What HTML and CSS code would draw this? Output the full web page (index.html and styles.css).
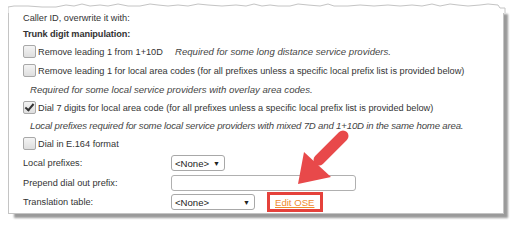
FILE: index.html
```html
<!DOCTYPE html>
<html>
<head>
<meta charset="utf-8">
<link rel="stylesheet" href="styles.css">
</head>
<body>
<div class="card">
  <svg class="torn" width="500" height="10" viewBox="0 0 500 10">
    <path d="M0 10 L0 4 L6 3 L20 3 L34 4 L48 4 L58 2 L66 3 L74 1 L82 3 L92 2 L100 3 L110 1 L120 3 L132 3 L142 1 L150 2 L160 3 L170 2 L180 3 L190 1 L200 2 L214 3 L228 2 L238 3 L246 1 L254 3 L262 2 L270 3 L282 3 L290 1 L300 2 L312 3 L320 1 L326 3 L340 3 L352 2 L366 3 L380 2 L392 3 L404 2 L414 3 L424 1 L432 3 L442 1 L450 2 L460 3 L472 2 L480 1 L490 2 L492 5 L497 5 L497 10 Z" fill="#fff" stroke="none"/>
    <path d="M0 10 L0 4 L6 3 L20 3 L34 4 L48 4 L58 2 L66 3 L74 1 L82 3 L92 2 L100 3 L110 1 L120 3 L132 3 L142 1 L150 2 L160 3 L170 2 L180 3 L190 1 L200 2 L214 3 L228 2 L238 3 L246 1 L254 3 L262 2 L270 3 L282 3 L290 1 L300 2 L312 3 L320 1 L326 3 L340 3 L352 2 L366 3 L380 2 L392 3 L404 2 L414 3 L424 1 L432 3 L442 1 L450 2 L460 3 L472 2 L480 1 L490 2 L492 5 L497 5 L497 10" fill="none" stroke="#c4c4c4" stroke-width="1"/>
  </svg>
  <div class="row h16">Caller ID, overwrite it with:</div>
  <div class="row h16 bold">Trunk digit manipulation:</div>
  <div class="row h19"><span class="cb"></span><span class="opt1">Remove leading 1 from 1+10D</span><span class="note">Required for some long distance service providers.</span></div>
  <div class="row h19"><span class="cb"></span><span>Remove leading 1 for local area codes (for all prefixes unless a specific local prefix list is provided below)</span></div>
  <div class="row h19 sub note">Required for some local service providers with overlay area codes.</div>
  <div class="row h17"><span class="cb checked"></span><span>Dial 7 digits for local area code (for all prefixes unless a specific local prefix list is provided below)</span></div>
  <div class="row h18 sub note tight">Local prefixes required for some local service providers with mixed 7D and 1+10D in the same home area.</div>
  <div class="row h19"><span class="cb"></span><span>Dial in E.164 format</span></div>
  <div class="row h20"><span class="label">Local prefixes:</span><span class="select s1">&lt;None&gt;<span class="caret">▼</span></span></div>
  <div class="row h19"><span class="label">Prepend dial out prefix:</span><span class="input"></span></div>
  <div class="row h20"><span class="label">Translation table:</span><span class="select s2">&lt;None&gt;<span class="caret">▼</span></span><span class="hl"><a class="link" href="#">Edit OSE</a></span></div>
</div>
<svg class="arrow" width="70" height="70" viewBox="0 0 70 70">
  <line x1="46" y1="6" x2="22" y2="30" stroke="#e8494a" stroke-width="11" stroke-linecap="round"/>
  <polygon points="7,22 34,47 1,54" fill="#e8494a"/>
</svg>
</body>
</html>
```

FILE: styles.css
```css
html, body {
  margin: 0;
  padding: 0;
  background: #fff;
}
body {
  width: 518px;
  height: 228px;
  position: relative;
  overflow: hidden;
  font-family: "Liberation Sans", Arial, sans-serif;
  font-size: 9.2px;
  color: #333;
}
.card {
  position: relative;
  margin: 8px 0 0 8px;
  width: 496px;
  height: 206px;
  border: 1px solid #c4c4c4;
  border-top: none;
  background: #fff;
  padding: 2px 0 0 14px;
  box-sizing: border-box;
  box-shadow: 5px 5px 2px -1px #9a9a9a;
}
.torn {
  position: absolute;
  left: -1px;
  top: -5px;
}
.row {
  display: flex;
  align-items: center;
  white-space: nowrap;
  position: relative;
}
.h16 { height: 16px; }
.h17 { height: 17px; }
.h18 { height: 18px; }
.h19 { height: 19px; }
.h20 { height: 20px; }
.bold { font-weight: bold; letter-spacing: -0.1px; }
.note { font-style: italic; color: #444; font-size: 9.6px; }
.tight { letter-spacing: -0.17px; }
.sub { padding-left: 7px; }
.cb {
  width: 11px;
  height: 11px;
  border: 1px solid #a8a8a8;
  border-radius: 2px;
  background: linear-gradient(#f4f4f4, #dedede);
  margin-right: 2px;
  position: relative;
  flex: none;
}
.cb.checked::after {
  content: "";
  position: absolute;
  left: 3px;
  top: 0px;
  width: 3px;
  height: 7px;
  border: solid #333;
  border-width: 0 2px 2px 0;
  transform: rotate(40deg);
}
.opt1 { width: 137px; }
.label { width: 148px; flex: none; }
.select {
  display: flex;
  align-items: center;
  justify-content: space-between;
  height: 14px;
  border: 1px solid #a8a8a8;
  border-radius: 3px;
  padding: 0 4px 0 3px;
  box-sizing: content-box;
  background: #fff;
  color: #222;
  font-size: 9.6px;
}
.s1 { width: 45px; }
.s2 { width: 75px; }
.caret { font-size: 7px; color: #222; }
.input {
  width: 183px;
  height: 14px;
  border: 1px solid #b0b0b0;
  border-radius: 3px;
  background: #fff;
}
.hl {
  margin-left: 12px;
  border: 3px solid #e5413b;
  height: 14px;
  width: 40px;
  padding: 0 5px 0 5px;
  display: flex;
  align-items: center;
}
.link {
  color: #f08a2e;
  text-decoration: underline;
  font-size: 9.6px;
}
.arrow {
  position: absolute;
  left: 297px;
  top: 130px;
}
```
